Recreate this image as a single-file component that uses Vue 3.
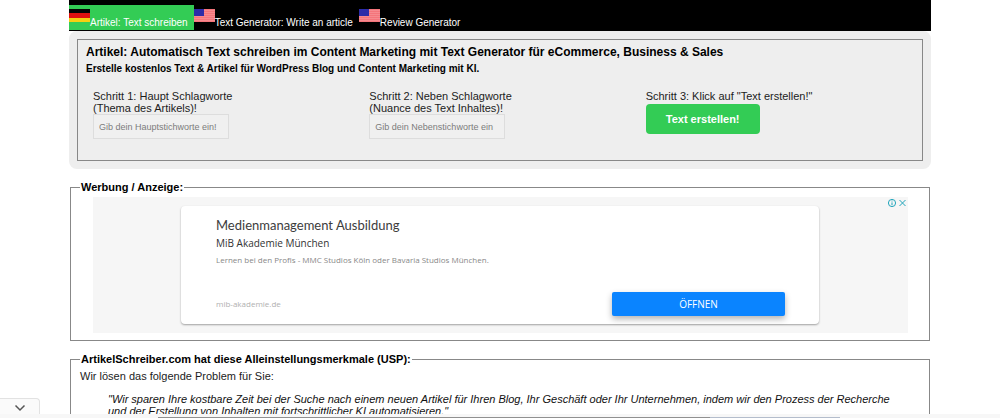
<script setup>
import { ref } from 'vue'

const mainKeywords = ref('')
const sideKeywords = ref('')
const links = [
  { label: 'Artikel: Text schreiben', flag: 'de', active: true },
  { label: 'Text Generator: Write an article', flag: 'us', active: false },
  { label: 'Review Generator', flag: 'us', active: false },
]
</script>

<template>
  <div class="page">
    <nav class="nav">
      <a v-for="link in links" :key="link.label" href="#" class="nav-link" :class="{ active: link.active }">
        <svg v-if="link.flag === 'de'" class="flag" viewBox="0 0 21 13" aria-hidden="true">
          <rect width="21" height="5" fill="#050505" />
          <rect y="4" width="21" height="5" fill="#e01010" />
          <rect y="9" width="21" height="4" fill="#f6cf12" />
        </svg>
        <svg v-else class="flag" viewBox="0 0 21 13" aria-hidden="true">
          <rect width="21" height="13" fill="#f4757b" />
          <path d="M0 1.500h21M0 3.500h21M0 5.500h21M0 7.500h21M0 9.500h21M0 11.500h21" stroke="#f68a8f" stroke-width="1" />
          <rect width="10" height="7" fill="#2c2ca8" />
        </svg>
        <span>{{ link.label }}</span>
      </a>
    </nav>

    <form class="panel" @submit.prevent>
      <div class="panel-inner">
        <h1>Artikel: Automatisch Text schreiben im Content Marketing mit Text Generator für eCommerce, Business &amp; Sales</h1>
        <h2>Erstelle kostenlos Text &amp; Artikel für WordPress Blog und Content Marketing mit KI.</h2>
        <div class="steps">
          <div class="step">
            <label for="main">Schritt 1: Haupt Schlagworte<br />(Thema des Artikels)!</label>
            <input id="main" v-model="mainKeywords" type="text" placeholder="Gib dein Hauptstichworte ein!" />
          </div>
          <div class="step">
            <label for="side">Schritt 2: Neben Schlagworte<br />(Nuance des Text Inhaltes)!</label>
            <input id="side" v-model="sideKeywords" type="text" placeholder="Gib dein Nebenstichworte ein" />
          </div>
          <div class="step">
            <span>Schritt 3: Klick auf "Text erstellen!"</span>
            <button type="submit" class="create">Text erstellen!</button>
          </div>
        </div>
      </div>
    </form>

    <fieldset class="box">
      <legend>Werbung / Anzeige:</legend>
      <div class="ad">
        <div class="ad-card">
          <div class="ad-title">Medienmanagement Ausbildung</div>
          <div class="ad-brand">MiB Akademie München</div>
          <div class="ad-text">Lernen bei den Profis - MMC Studios Köln oder Bavaria Studios München.</div>
          <div class="ad-foot">
            <span class="ad-url">mib-akademie.de</span>
            <button type="button" class="open">ÖFFNEN</button>
          </div>
        </div>
        <div class="ad-marks">
          <svg viewBox="0 0 20 10" aria-hidden="true">
            <circle cx="5" cy="5" r="3.6" />
            <path d="M5 4.400v2.800M5 2.600v.9M12.500 2l6 6M18.500 2l-6 6" />
          </svg>
        </div>
      </div>
    </fieldset>

    <fieldset class="box usp">
      <legend>ArtikelSchreiber.com hat diese Alleinstellungsmerkmale (USP):</legend>
      <p>Wir lösen das folgende Problem für Sie:</p>
      <blockquote>"Wir sparen Ihre kostbare Zeit bei der Suche nach einem neuen Artikel für Ihren Blog, Ihr Geschäft oder Ihr Unternehmen, indem wir den Prozess der Recherche und der Erstellung von Inhalten mit fortschrittlicher KI automatisieren."</blockquote>
    </fieldset>

    <div class="dock">
      <button type="button" class="dock-toggle" aria-label="Anzeige ausblenden">
        <svg viewBox="0 0 12 8" aria-hidden="true"><path d="M1.500 1.500L6 6l4.500-4.500" /></svg>
      </button>
      <div class="dock-bar"><div class="dock-line"></div></div>
    </div>
  </div>
</template>

<style>
body {
  margin: 0;
  background: #fff;
}
</style>

<style scoped>
.page {
  box-sizing: border-box;
  height: 100vh;
  overflow: hidden;
  padding: 0 69px;
  font-family: "Liberation Sans", Arial, sans-serif;
  font-size: 11px;
  line-height: 12px;
  color: #1c1c1c;
}
.nav {
  display: flex;
  box-sizing: border-box;
  height: 31px;
  padding: 5px 0 1px;
  background: #000;
}
.nav-link {
  display: flex;
  padding: 4px 6px 0 0;
  color: #fff;
  font-size: 10px;
  line-height: 12px;
  text-decoration: none;
}
.nav-link span {
  padding-top: 8px;
}
.nav-link.active {
  background: #33cc55;
}
.flag {
  width: 21px;
  height: 13px;
}
.panel {
  padding: 8px;
  border-radius: 8px;
  background: #eee;
}
.panel-inner {
  border: 1px solid #888;
  padding: 4px 0 21px 8px;
}
h1,
h2 {
  margin: 0;
  color: #000;
}
h1 {
  font-size: 12px;
  line-height: 16px;
}
h2 {
  margin-top: 2px;
  font-size: 10px;
  line-height: 14px;
}
.steps {
  display: grid;
  grid-template-columns: repeat(3, 1fr);
  padding: 14px 0 0 7px;
}
.step {
  display: flex;
  flex-direction: column;
  align-items: flex-start;
}
.step input {
  box-sizing: border-box;
  width: 136px;
  height: 25px;
  padding: 0 5px;
  border: 1px solid #ddd;
  background: #f0f0f0;
  font: 9px "Liberation Sans", Arial, sans-serif;
}
.step input::placeholder {
  color: #7c7c7c;
}
.create {
  width: 114px;
  height: 30px;
  margin-top: 2px;
  padding: 0;
  border: 0;
  border-radius: 4px;
  background: #33cc55;
  color: #fff;
  font: bold 11px "Liberation Sans", Arial, sans-serif;
}
.box {
  min-width: 0;
  margin: 12px 1px 0;
  padding: 3px 9px 7px;
  border: 1px solid #888;
}
.box legend {
  padding: 0 1px;
  color: #000;
  font-size: 11px;
  font-weight: bold;
  line-height: 13px;
}
.ad {
  position: relative;
  margin: 0 12px 0 13px;
  padding: 9px 89px 9px 88px;
  background: #f6f6f6;
}
.ad-card {
  padding: 10px 34px 8px 35px;
  border-radius: 4px;
  background: #fff;
  box-shadow: 0 1px 2px rgba(0, 0, 0, 0.35);
  font-family: "Open Sans", sans-serif;
}
.ad-title {
  color: #3c3c3c;
  font-family: Lato, sans-serif;
  font-size: 13px;
  line-height: 18px;
}
.ad-brand {
  color: #333;
  font-size: 10px;
  line-height: 18px;
}
.ad-text {
  color: #888;
  font-size: 8px;
  line-height: 16px;
}
.ad-foot {
  display: flex;
  align-items: center;
  justify-content: space-between;
  margin-top: 24px;
}
.ad-url {
  color: #b0b0b0;
  font-size: 8px;
}
.open {
  width: 173px;
  height: 24px;
  padding: 0;
  border: 0;
  border-radius: 2px;
  background: #0a84ff;
  box-shadow: 0 3px 6px rgba(0, 0, 0, 0.3);
  color: #fff;
  font: 10px "Open Sans", sans-serif;
}
.ad-marks {
  position: absolute;
  top: 1px;
  right: 1px;
}
.ad-marks svg {
  display: block;
  width: 20px;
  height: 10px;
  fill: none;
  stroke: #21a5bb;
  stroke-width: 1;
}
.usp p {
  margin: 1px 0 0;
}
.usp blockquote {
  margin: 11px 28px 0;
  color: #111;
  font-style: italic;
}
.dock {
  position: fixed;
  right: 0;
  bottom: 0;
  left: 0;
}
.dock-toggle {
  display: flex;
  align-items: center;
  justify-content: center;
  width: 40px;
  height: 16px;
  padding: 3px 0 0;
  border: 1px solid #e2e2e2;
  border-width: 1px 1px 0 0;
  border-radius: 0 4px 0 0;
  background: #fafafa;
}
.dock-toggle svg {
  width: 12px;
  height: 8px;
  fill: none;
  stroke: #555;
  stroke-width: 1.5;
}
.dock-bar {
  display: flex;
  height: 4px;
  padding-left: 158px;
  background: #f7f7f7;
}
.dock-line {
  width: 81%;
  height: 1px;
  margin-top: 3px;
  background: linear-gradient(90deg, #909090 81%, #b4bdcc 81%);
}
</style>
